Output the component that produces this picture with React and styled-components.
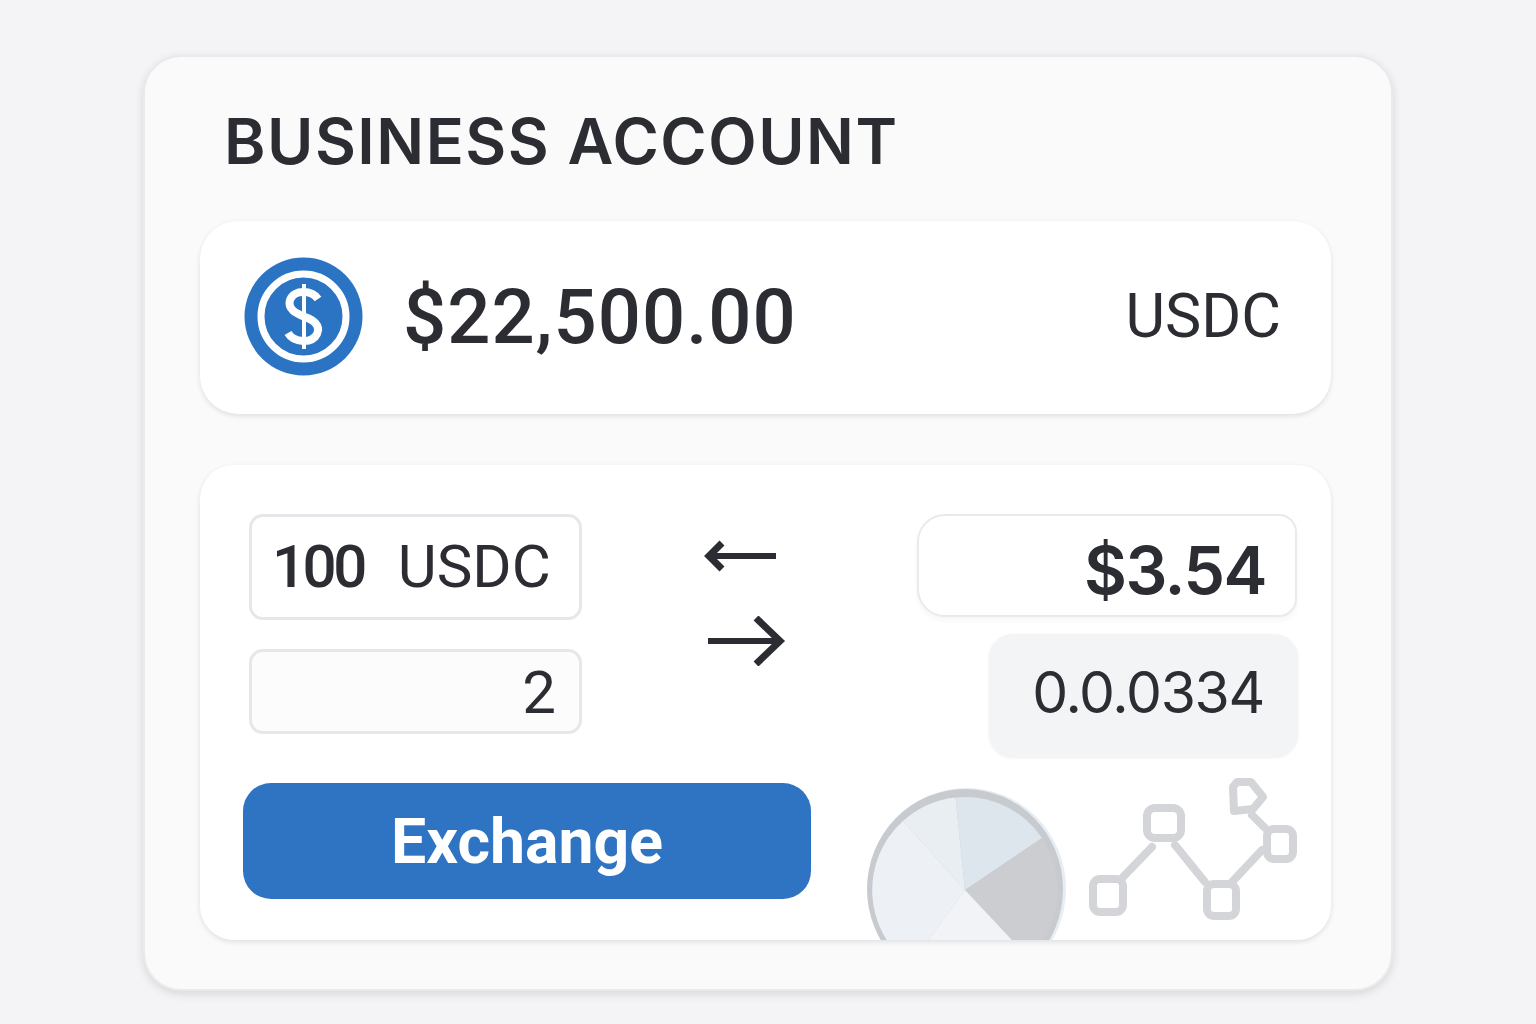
import React from "react";
import styled, { createGlobalStyle } from "styled-components";

const Global = createGlobalStyle`
  html, body { margin: 0; padding: 0; background: #f4f4f6; }
  body { font-family: "Roboto", "Inter", "Liberation Sans", sans-serif; color: #2b2d33; }
`;
const Page = styled.div`
  width: 1536px; height: 1024px; box-sizing: border-box; padding: 55px 143px 33px; overflow: hidden;
  background: #f4f4f6;
`;
const Card = styled.main`
  box-sizing: border-box; width: 1250px; height: 936px; padding: 52px 60px 0 55px;
  background: #fafafb; border-radius: 38px; border: 2px solid #e9eaed;
  box-shadow: 0 3px 8px rgba(40, 44, 60, .14);
`;
const Title = styled.h1`
  margin: 0 0 47px 24px; height: 65px; font: 600 63px/65px "Inter", sans-serif; letter-spacing: 1.5px; color: #2b2d33; white-space: nowrap;
`;
const Balance = styled.section`
  box-sizing: border-box; height: 193px; display: flex; align-items: center; padding: 0 50px 2px 44px;
  background: #fff; border-radius: 38px; box-shadow: 0 2px 5px rgba(40, 44, 60, .13);
`;
const Amount = styled.div`
  margin-left: 40px; font: 500 76px/1 "Roboto", sans-serif; letter-spacing: 1px; color: #2b2d33;
`;
const Currency = styled.div`
  margin-left: auto; font: 400 61px/1 "Roboto", sans-serif; color: #2b2d33;
`;
const Panel = styled.section`
  box-sizing: border-box; height: 475px; margin-top: 51px; padding: 49px 30px 0 43px;
  background: #fff; border-radius: 34px; box-shadow: 0 2px 5px rgba(40, 44, 60, .13);
`;
const TopRow = styled.div`
  display: flex; height: 243px; margin-bottom: 26px;
`;
const LeftCol = styled.div`
  display: flex; flex-direction: column; gap: 29px; width: 333px; margin-left: 6px;
`;
const Field = styled.div`
  box-sizing: border-box; display: flex; align-items: center;
  justify-content: ${p => (p.$end ? "flex-end" : "flex-start")};
  height: ${p => p.$h}px; padding: ${p => (p.$end ? "2px 23px 0 0" : "0 0 0 20px")};
  background: ${p => (p.$end ? "#fcfcfd" : "#fff")}; border: 3px solid #e6e7ea; border-radius: 14px;
  font: 400 60px/1 "Roboto", sans-serif; color: #2b2d33; white-space: pre;
`;
const Qty = styled.span`
  font-weight: 500; letter-spacing: -3.5px; margin-right: 34px;
`;
const Arrows = styled.div`
  display: flex; flex-direction: column; width: 82px; margin-left: 122px; padding-top: 24px; gap: 42px;
`;
const RightCol = styled.div`
  display: flex; flex-direction: column; align-items: flex-end; margin-left: auto; margin-right: 3px;
`;
const Quote = styled.div`
  box-sizing: border-box; width: 380px; height: 103px; margin-right: 1px; padding: 8px 29px 0 0;
  display: flex; align-items: center; justify-content: flex-end;
  background: #fff; border: 2px solid #e9eaed; border-radius: 28px 18px 18px 28px;
  box-shadow: 0 4px 5px rgba(40, 44, 60, .04);
  font: 600 66px/1 "Inter", sans-serif; letter-spacing: -1.5px; color: #2b2d33;
`;
const Rate = styled.div`
  box-sizing: border-box; width: 309px; height: 123px; margin-top: 17px; padding: 0 34px 6px 0;
  display: flex; align-items: center; justify-content: flex-end;
  background: #f3f4f6; border-radius: 24px; box-shadow: 0 1px 3px rgba(40, 44, 60, .08);
  font: 400 57px/1 "Inter", sans-serif; letter-spacing: -1.3px; color: #2b2d33;
`;
const BottomRow = styled.div`
  display: flex; align-items: flex-start;
`;
const ExchangeButton = styled.button`
  flex: none; width: 568px; height: 116px; padding: 3px 0 0; border: 0; border-radius: 28px; background: #2e74c2;
  color: #fff; font: 700 62.5px/1 "Roboto", sans-serif; cursor: pointer;
`;
const Pie = styled.svg`
  display: block; flex: none; width: 210px; height: 157px; margin-left: 47px;
`;
const Network = styled.svg`
  display: block; flex: none; width: 216px; height: 150px; margin-left: 17px; margin-top: -6px; filter: blur(.6px);
`;
const CoinIcon = styled.svg`
  display: block; flex: none; width: 119px; height: 119px;
`;
const Arrow = styled.svg`
  display: block; width: 82px; height: ${p => p.$h}px;
`;

const slice = (x1, y1, x2, y2) => `M107 107L${x1} ${y1}A93 93 0 0 1 ${x2} ${y2}Z`;

export default function App() {
  return (
    <Page>
      <Global />
      <Card>
        <Title>BUSINESS ACCOUNT</Title>
        <Balance>
          <CoinIcon viewBox="0 0 119 119">
            <circle cx="59.5" cy="59.5" r="59" fill="#2b74c4" />
            <circle cx="59.5" cy="59.5" r="42.5" fill="none" stroke="#fff" strokeWidth="7" />
            <path d="M74 42C68 33 50 32 46 43C43 53 54 57 61 60C69 63 77 68 73 77C68 87 50 86 44 76" fill="none" stroke="#fff" strokeWidth="8" />
            <path d="M60 27V92" stroke="#fff" strokeWidth="4" />
          </CoinIcon>
          <Amount>$22,500.00</Amount>
          <Currency>USDC</Currency>
        </Balance>
        <Panel>
          <TopRow>
            <LeftCol>
              <Field $h={106}><Qty>100</Qty>USDC</Field>
              <Field $h={85} $end>2</Field>
            </LeftCol>
            <Arrows>
              <Arrow $h={36} viewBox="0 0 82 36" fill="none" stroke="#2b2d33">
                <path d="M4 18H72" strokeWidth="6" />
                <path d="M18 5L5 18L18 31" strokeWidth="7" />
              </Arrow>
              <Arrow $h={50} viewBox="0 0 82 50" fill="none" stroke="#2b2d33">
                <path d="M4 25H76" strokeWidth="6" />
                <path d="M52 2L76 25L52 48" strokeWidth="7" />
              </Arrow>
            </Arrows>
            <RightCol>
              <Quote>$3.54</Quote>
              <Rate>0.0.0334</Rate>
            </RightCol>
          </TopRow>
          <BottomRow>
            <ExchangeButton>Exchange</ExchangeButton>
            <Pie viewBox="0 0 210 157">
              <ellipse cx="109" cy="106" rx="99" ry="101" fill="#e6edf3" />
              <ellipse cx="107" cy="106" rx="98" ry="100" fill="#c7cacf" />
              <path d={slice(45, 38, 97.5, 14.5)} fill="#e9eef3" />
              <path d={slice(97.5, 14.5, 184, 55)} fill="#dde5ed" />
              <path d={slice(184, 55, 170.6, 174.8)} fill="#cbcdd0" />
              <path d={slice(52, 182, 45, 38)} fill="#edf1f5" />
              <path d={slice(170.6, 174.8, 52, 182)} fill="#f1f3f6" />
            </Pie>
            <Network viewBox="0 0 216 150" fill="none" stroke="#d3d5d9" strokeWidth="8" strokeLinejoin="round" strokeLinecap="round">
              <rect x="8" y="102" width="30" height="33" rx="7" />
              <rect x="62" y="31" width="34" height="30" rx="8" />
              <rect x="122" y="107" width="29" height="32" rx="7" />
              <rect x="182" y="52" width="26" height="30" rx="7" />
              <path d="M152 5H166L178 20L168 32L149 34L148 10Z" />
              <path d="M38 100L67 70" />
              <path d="M90 68L120 105" />
              <path d="M147 105L177 73" />
              <path d="M167 38L180 51" />
            </Network>
          </BottomRow>
        </Panel>
      </Card>
    </Page>
  );
}
